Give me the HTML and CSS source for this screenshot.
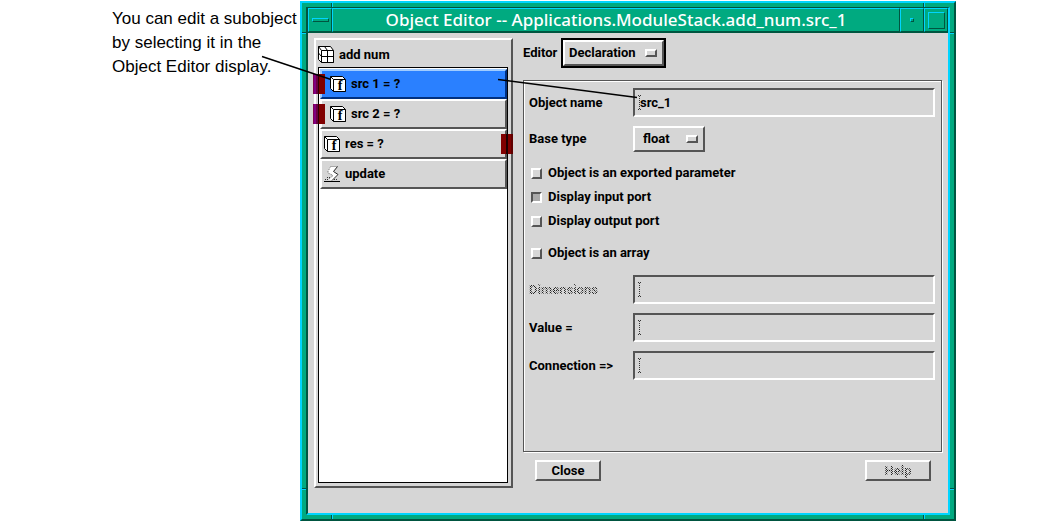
FILE: index.html
```html
<!DOCTYPE html>
<html lang="en">
<head>
  <meta charset="UTF-8">
  <meta name="viewport" content="width=device-width, initial-scale=1.0">
  <title>Object Editor</title>
  <link rel="stylesheet" href="styles.css">
</head>
<body>
  <svg class="defs" aria-hidden="true">
    <symbol id="icon-grid" viewBox="0 0 17 17">
      <path d="M0.5 0.5H12.5L15.5 4.5V16.5H3.5L0.5 13.5Z" fill="#fff" stroke="#000"/>
      <path d="M0.5 0.5L3.5 4.5M6.5 0.5L9.5 4.5M0.5 7L3.5 10.5" stroke="#000"/>
      <path d="M3.5 4.5H15.5V16.5H3.5ZM9.5 4.5V16.5M3.5 10.5H15.5" fill="#fff" stroke="#000"/>
    </symbol>
    <symbol id="icon-float" viewBox="0 0 17 17">
      <path d="M0.5 0.5H12.5L15.5 3.5V15.5H3.5L0.5 12.5Z" fill="#fff" stroke="#000"/>
      <path d="M0.5 0.5L3.5 3.5" stroke="#000"/>
      <path d="M3.5 3.5H15.5V15.5H3.5Z" fill="#fff" stroke="#000"/>
    </symbol>
    <symbol id="icon-update" viewBox="0 0 17 17">
      <path d="M6 0.5H13.5L9.5 5.5L14.5 8.5L8.5 14.5L4.5 13.5L9 9.5L3.5 6.5Z" fill="#fff"/>
      <path d="M13.5 0.5L9.5 5.5L14 8.5L8 14.5" fill="none" stroke="#222"/>
      <path d="M13.5 0.5H6.5L3.5 6.5L9 9.5L4.5 13.5" fill="none" stroke="#666" stroke-dasharray="1 1"/>
      <path d="M0 15.5H16" stroke="#000"/>
      <path d="M1 13.5H5M3 11.5H6M10 13.5H14" stroke="#333" stroke-dasharray="1 1"/>
    </symbol>
  </svg>
  <main class="figure">
    <p class="callout">You can edit a subobject<br>by selecting it in the<br>Object Editor display.</p>
    <div class="window">
      <div class="windowInner">
        <header class="titleBar">
          <button class="titleButton menu" aria-label="Window menu"></button>
          <h1>Object Editor -- Applications.ModuleStack.add_num.src_1</h1>
          <button class="titleButton minimize" aria-label="Minimize"></button>
          <button class="titleButton maximize" aria-label="Maximize"></button>
        </header>
        <div class="windowBody">
          <section class="tree">
            <div class="treeHeader"><svg class="icon"><use href="#icon-grid"/></svg>add num</div>
            <ul class="treeList">
              <li class="treeItem input is-selected"><svg class="icon"><use href="#icon-float"/><text class="iconLetter" x="10" y="14">f</text></svg>src 1 = ?</li>
              <li class="treeItem input"><svg class="icon"><use href="#icon-float"/><text class="iconLetter" x="10" y="14">f</text></svg>src 2 = ?</li>
              <li class="treeItem output"><svg class="icon"><use href="#icon-float"/><text class="iconLetter" x="10" y="14">f</text></svg>res = ?</li>
              <li class="treeItem"><svg class="icon"><use href="#icon-update"/></svg>update</li>
            </ul>
          </section>
          <form class="editor">
            <div class="editorType">
              <label for="editor">Editor</label>
              <div class="optionMenu is-focused">
                <select id="editor"><option>Declaration</option></select>
              </div>
            </div>
            <div class="panel">
              <div class="field">
                <label for="objectName">Object name</label>
                <input class="textField" type="text" id="objectName" value="src_1">
              </div>
              <div class="field">
                <label for="baseType">Base type</label>
                <div class="optionMenu">
                  <select id="baseType"><option>float</option></select>
                </div>
              </div>
              <div class="checks">
                <label class="check"><input type="checkbox">Object is an exported parameter</label>
                <label class="check"><input type="checkbox" checked>Display input port</label>
                <label class="check"><input type="checkbox">Display output port</label>
                <label class="check array"><input type="checkbox">Object is an array</label>
              </div>
              <div class="field">
                <label for="dimensions"><span class="stipple">Dimensions</span></label>
                <input class="textField" type="text" id="dimensions" disabled>
              </div>
              <div class="field">
                <label for="value">Value =</label>
                <input class="textField" type="text" id="value">
              </div>
              <div class="field">
                <label for="connection">Connection =&gt;</label>
                <input class="textField" type="text" id="connection">
              </div>
            </div>
            <div class="actions">
              <button type="button" class="pushButton">Close</button>
              <button type="button" class="pushButton" disabled><span class="stipple">Help</span></button>
            </div>
          </form>
        </div>
      </div>
    </div>
    <svg class="pointers" width="640" height="110" aria-hidden="true">
      <path d="M262 56.5L331 79.5M498 79.5L637 97.5"/>
    </svg>
  </main>
</body>
</html>
```
FILE: styles.css
```css
*, *::before, *::after {
  margin: 0;
  padding: 0;
  box-sizing: border-box;
}
:root {
  --gray: #d6d6d6;
  --shade: #555;
  --green: #00aa80;
  --cyan: #00d5ff;
  --dark: #005540;
}
body {
  background-color: #fff;
  color: #000;
  font-family: Roboto, "Liberation Sans", sans-serif;
  font-size: 13px;
  font-weight: bold;
  line-height: 16px;
}
button, input, select {
  font: inherit;
  color: inherit;
  background-color: var(--gray);
  border-radius: 0;
  appearance: none;
  outline: none;
}
.defs {
  position: absolute;
  width: 0;
  height: 0;
}
.figure {
  position: relative;
  display: flex;
  padding: 1px 94px 5px 112px;
}
.callout {
  flex: 0 0 188px;
  padding-top: 6px;
  font-family: "Liberation Sans", Arial, sans-serif;
  font-size: 17px;
  font-weight: normal;
  line-height: 24px;
  white-space: nowrap;
}
.pointers {
  position: absolute;
  top: 0;
  left: 0;
  fill: none;
  stroke: #000;
  stroke-width: 1.5;
  pointer-events: none;
}

/* window frame, with the resize corner seams drawn as backgrounds */
.window {
  flex: 1;
  padding: 4px;
  border: 2px solid;
  border-color: var(--cyan) var(--dark) var(--dark) var(--cyan);
  background-color: var(--green);
  background-image:
    linear-gradient(90deg, var(--dark) 50%, var(--cyan) 50%),
    linear-gradient(90deg, var(--dark) 50%, var(--cyan) 50%),
    linear-gradient(var(--dark) 50%, var(--cyan) 50%),
    linear-gradient(var(--dark) 50%, var(--cyan) 50%);
  background-size: 2px 100%, 2px 100%, 100% 2px, 100% 2px;
  background-position: left 29px top 0, right 29px top 0, left 0 top 29px, left 0 bottom 29px;
  background-repeat: no-repeat;
}
.windowInner {
  border: 2px solid;
  border-top-width: 1px;
  border-color: var(--dark) var(--cyan) var(--cyan) var(--dark);
  background-color: var(--gray);
}
.titleBar {
  display: flex;
  height: 25px;
  border-bottom: 1px solid var(--dark);
  background-color: var(--green);
  color: #fff;
}
.titleBar h1 {
  flex: 1;
  font-family: "Noto Sans", sans-serif;
  font-size: 17px;
  font-weight: 500;
  line-height: 22px;
  text-align: center;
  white-space: nowrap;
}
.titleBar > * {
  border: 1px solid;
  border-color: var(--cyan) var(--dark) var(--dark) var(--cyan);
}
.titleButton {
  display: grid;
  place-items: center;
  width: 24px;
  background-color: var(--green);
}
.titleButton::before {
  content: "";
  border: 1px solid;
  border-color: var(--cyan) var(--dark) var(--dark) var(--cyan);
}
.menu::before {
  width: 17px;
  height: 4px;
}
.minimize::before {
  width: 4px;
  height: 4px;
}
.maximize::before {
  width: 17px;
  height: 17px;
}

.windowBody {
  display: flex;
  gap: 10px;
  padding: 5px 6px 25px;
}
.tree {
  display: flex;
  flex-direction: column;
  flex: 0 0 199px;
  padding: 2px 2px 3px;
  border: 2px solid;
  border-color: #fff var(--shade) var(--shade) #fff;
}
.treeHeader {
  display: flex;
  align-items: center;
  gap: 4px;
  height: 25px;
}
.icon {
  width: 17px;
  height: 17px;
}
.iconLetter {
  font-family: "Liberation Serif", serif;
  font-size: 14px;
  font-weight: bold;
  text-anchor: middle;
}
.treeList {
  flex: 1;
  margin-right: 1px;
  padding: 1px 0 0 1px;
  border: 1px solid #000;
  background-color: #fff;
  list-style: none;
}
.treeItem {
  position: relative;
  display: flex;
  align-items: center;
  gap: 4px;
  height: 30px;
  padding: 0 2px;
  border: 2px solid;
  border-color: #fff var(--shade) var(--shade) #fff;
  background-color: var(--gray);
}
.treeItem.input {
  padding-left: 8px;
}
.treeItem.is-selected {
  border-color: #a0ccff #003080 #003080 #a0ccff;
  background-color: #2a80ff;
}
.input::before, .output::after {
  content: "";
  position: absolute;
  top: 3px;
  width: 12px;
  height: 20px;
}
.input::before {
  left: -9px;
  background: linear-gradient(90deg, #800050 1px, #800080 1px 3px, #6a0040 3px 5px, #300000 5px 6px, #800000 6px);
}
.output::after {
  right: -8px;
  background: linear-gradient(90deg, #800000 5px, #200000 5px 7px, #800000 7px 10px, #600000 10px);
}

.editor {
  flex: 1;
  padding-bottom: 7px;
}
.editorType {
  display: flex;
  align-items: center;
  height: 30px;
}
.editorType label {
  width: 38px;
}
.optionMenu {
  position: relative;
  width: 72px;
}
.optionMenu select {
  display: block;
  width: 100%;
  height: 26px;
  padding: 0 8px;
  border: 2px solid;
  border-color: #fff var(--shade) var(--shade) #fff;
}
.optionMenu::after {
  content: "";
  position: absolute;
  top: 9px;
  right: 7px;
  width: 12px;
  height: 8px;
  border: 2px solid;
  border-color: #fff var(--shade) var(--shade) #fff;
  pointer-events: none;
}
.optionMenu.is-focused {
  width: 105px;
  border: 2px solid #000;
}
.is-focused select {
  padding: 0 4px;
}
.panel {
  margin-top: 12px;
  padding: 7px 6px 71px 5px;
  border: 1px solid var(--shade);
  box-shadow: 1px 1px 0 #fff, inset 1px 1px 0 #fff;
}
.field {
  display: grid;
  grid-template-columns: 104px 1fr;
  align-items: center;
}
.field + .field {
  margin-top: 9px;
}
.textField {
  width: 100%;
  height: 29px;
  padding-left: 5px;
  border: 2px solid;
  border-color: var(--shade) #fff #fff var(--shade);
  /* dotted I-beam insertion cursor */
  background-image:
    linear-gradient(90deg, #333 1px, transparent 1px 2px, #333 2px),
    linear-gradient(90deg, #333 1px, transparent 1px 2px, #333 2px),
    repeating-linear-gradient(#333 0 1px, transparent 1px 2px);
  background-size: 3px 1px, 3px 1px, 1px 13px;
  background-position: 3px 5px, 3px 19px, 4px 6px;
  background-repeat: no-repeat;
}
.checks {
  margin: 9px 0 10px;
}
.check {
  display: flex;
  align-items: center;
  gap: 6px;
  height: 24px;
  padding-left: 2px;
}
.check.array {
  margin-top: 8px;
}
.check input {
  width: 11px;
  height: 11px;
  border: 2px solid;
  border-color: #fff var(--shade) var(--shade) #fff;
}
.check input:checked {
  border-color: var(--shade) #fff #fff var(--shade);
  background-color: #aaa;
}
.stipple {
  background: repeating-conic-gradient(#222 0 25%, var(--gray) 0 50%) 0 0 / 2px 2px;
  background-clip: text;
  color: transparent;
}
.actions {
  display: flex;
  justify-content: space-between;
  padding: 8px 11px 0 12px;
}
.pushButton {
  width: 66px;
  height: 21px;
  border: 2px solid;
  border-color: #fff var(--shade) var(--shade) #fff;
}
```
